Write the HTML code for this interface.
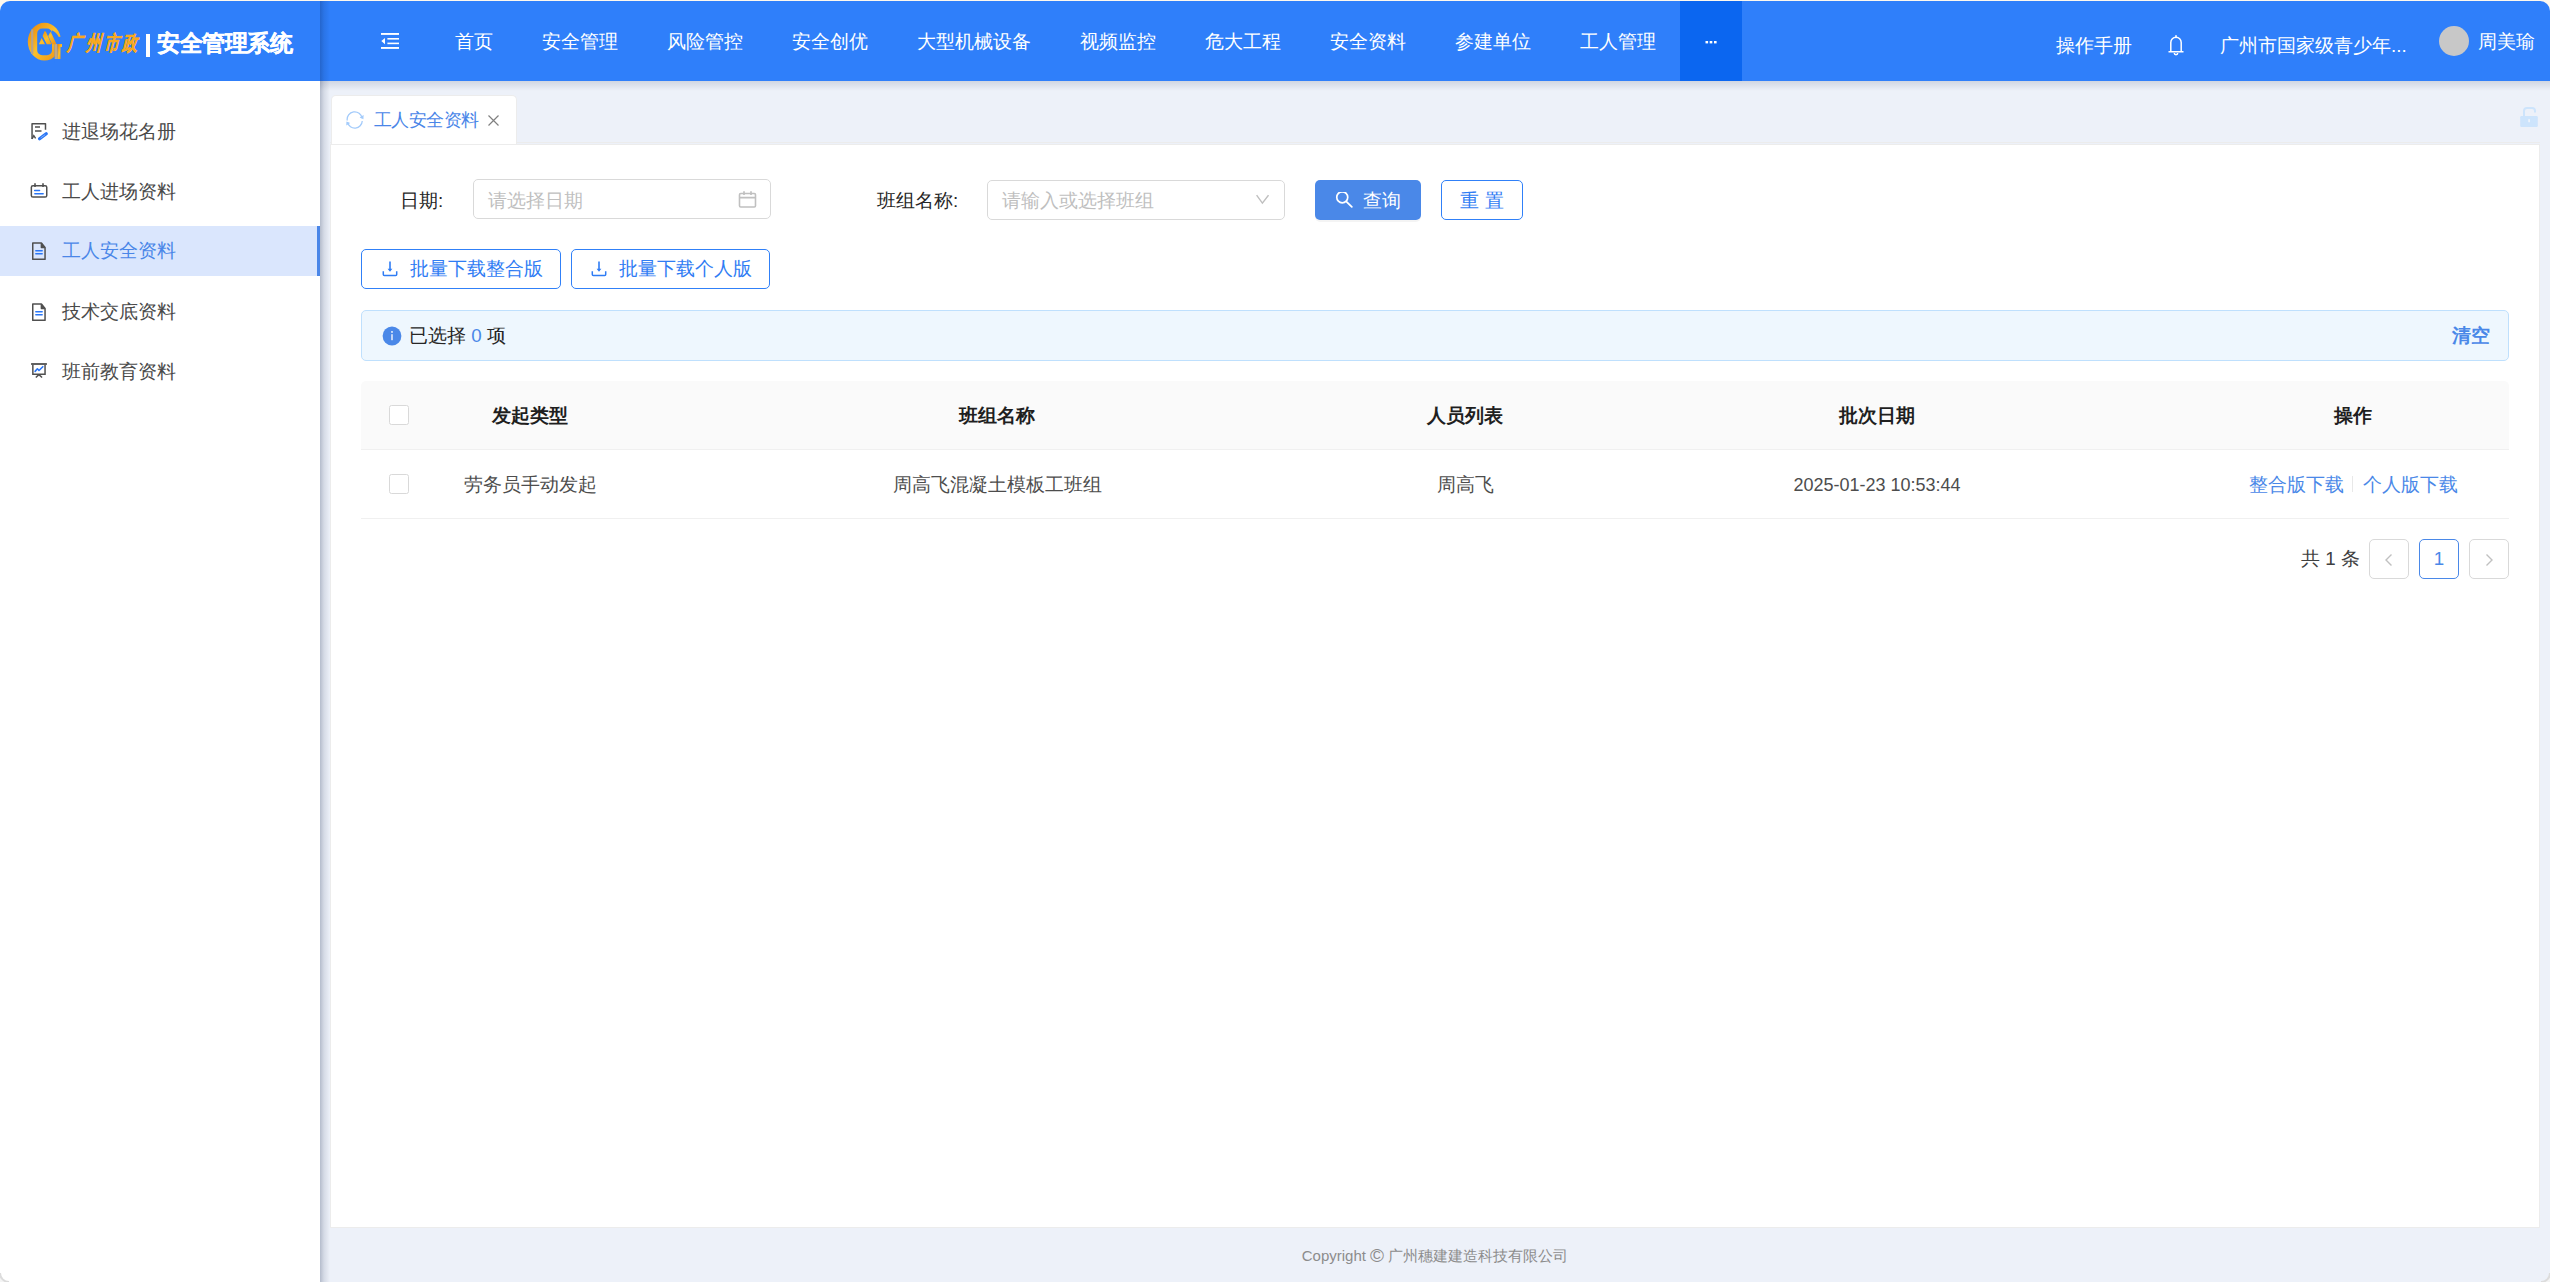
<!DOCTYPE html>
<html><head><meta charset="utf-8">
<style>
*{margin:0;padding:0;box-sizing:border-box}
html,body{width:2550px;height:1282px;overflow:hidden;background:#fdf8ee}
body{font-family:"Liberation Sans",sans-serif;position:relative}
.abs{position:absolute}
#app{position:absolute;left:0;top:1px;width:2550px;height:1281px;border-radius:10px 10px 10px 10px;overflow:hidden;background:#edf1f9}
#hdr{position:absolute;left:0;top:0;width:2550px;height:80px;background:#2f7ffa}
#side{position:absolute;left:0;top:80px;width:320px;height:1201px;background:#fff}
#sideshadow{position:absolute;left:320px;top:0;width:10px;height:1281px;background:linear-gradient(90deg,rgba(0,20,60,.24),rgba(0,20,60,.1) 40%,rgba(0,20,60,0))}
#hdrshadow{position:absolute;left:320px;top:80px;width:2230px;height:10px;background:linear-gradient(180deg,rgba(0,20,60,.12),rgba(0,20,60,0))}
.nav{position:absolute;height:80px;line-height:80px;color:#fff;font-size:18.75px;white-space:nowrap}
.si{position:absolute;left:0;width:320px;height:50px;line-height:50px;font-size:18.75px;color:#4a4a4a}
.si span{position:absolute;left:62px;top:0}
.si svg{position:absolute;left:30px;top:16px}
.txt{position:absolute;white-space:nowrap}
.th{top:402px;font-size:18.75px;line-height:26px;color:#1f1f1f;font-weight:bold}
.td{top:471px;font-size:18.75px;line-height:26px;color:#4d4d4d}
</style></head>
<body>
<div id="app">
  <div id="hdr">
    <!-- logo -->
    <svg class="abs" style="left:0;top:0" width="70" height="70" viewBox="0 0 70 70">
      <defs><linearGradient id="g1" x1="0" y1="0" x2="1" y2="1"><stop offset="0" stop-color="#e5820c"/><stop offset=".5" stop-color="#fcc02c"/><stop offset="1" stop-color="#ec8e12"/></linearGradient></defs>
      <path fill-rule="evenodd" fill="url(#g1)" d="M27.8 40.7 A16.7 18.9 0 1 0 61.2 40.7 A16.7 18.9 0 1 0 27.8 40.7 Z M42.2 27.6 H47 A5 5 0 0 1 52 32.6 V49.2 A5 5 0 0 1 47 54.2 H42.2 A5 5 0 0 1 37.2 49.2 V32.6 A5 5 0 0 1 42.2 27.6 Z"/>
      <path d="M51.8 29.2 Q56.8 31.5 58.8 36 L63 35.2 L66 43 L52 43 Z" fill="#2f7ffa"/>
      <path d="M54.7 42 H70 V62 H54.7 Z" fill="#2f7ffa"/>
      <path d="M54.7 43 H57.5 V58 H54.7 Z" fill="#c0a88a"/>
      <path d="M57.5 43 H62 V46 H60.5 V58 H57.5 Z" fill="url(#g1)"/>
      <path d="M32.2 28.5 V53" stroke="#b8a48c" stroke-width="2.2"/>
      <path d="M38.9 43.3 L41.6 37 L45 43.3 Z M44.6 30 L42.6 35 L46.8 43.3 L51.4 43.3 L45.9 30.8 Z M50.4 30.8 L48.2 35 L52 43.3 L56.5 43.3 L51.4 32.3 Z" fill="url(#g1)"/>
    </svg>
    <div class="txt" style="left:69px;top:29px;font-size:15px;line-height:26px;color:#f7a920;font-weight:bold;transform:skewX(-14deg) scaleY(1.35);transform-origin:0 50%;letter-spacing:3.2px;-webkit-text-stroke:0.3px #f7a920">广州市政</div>
    <div class="abs" style="left:146px;top:33px;width:4px;height:23px;background:#fff"></div>
    <div class="txt" style="left:157px;top:26px;font-size:22.5px;color:#fff;font-weight:bold;line-height:34px;-webkit-text-stroke:0.35px #fff;letter-spacing:-0.4px">安全管理系统</div>
    <!-- fold icon -->
    <svg class="abs" style="left:380px;top:32px" width="20" height="18" viewBox="0 0 20 18">
      <rect x="1" y="0" width="18" height="1.9" fill="#fff"/><rect x="7.4" y="5" width="11.6" height="1.6" fill="#fff"/><rect x="7.4" y="9.6" width="11.6" height="1.6" fill="#fff"/><rect x="1" y="14" width="18" height="1.9" fill="#fff"/>
      <path d="M1.3 8.1 L5 5 L5 11.2 Z" fill="#fff"/>
    </svg>
    <div class="nav" style="left:455px;top:1px">首页</div>
    <div class="nav" style="left:542px;top:1px">安全管理</div>
    <div class="nav" style="left:667px;top:1px">风险管控</div>
    <div class="nav" style="left:792px;top:1px">安全创优</div>
    <div class="nav" style="left:917px;top:1px">大型机械设备</div>
    <div class="nav" style="left:1080px;top:1px">视频监控</div>
    <div class="nav" style="left:1205px;top:1px">危大工程</div>
    <div class="nav" style="left:1330px;top:1px">安全资料</div>
    <div class="nav" style="left:1455px;top:1px">参建单位</div>
    <div class="nav" style="left:1580px;top:1px">工人管理</div>
    <div class="abs" style="left:1680px;top:0;width:62px;height:80px;background:#0b66f0"></div>
    <svg class="abs" style="left:1704px;top:39px" width="16" height="5" viewBox="0 0 16 5"><rect x="1.5" y="1" width="2.6" height="2.4" fill="#fff"/><rect x="5.7" y="1" width="2.6" height="2.4" fill="#fff"/><rect x="10" y="1" width="2.6" height="2.4" fill="#fff"/></svg>
    <div class="nav" style="left:2056px;top:4.5px">操作手册</div>
    <svg class="abs" style="left:2166px;top:33px" width="20" height="22" viewBox="0 0 20 22">
      <path d="M4.8 17 L4.8 8.5 A5.2 5.2 0 0 1 15.2 8.5 L15.2 17" fill="none" stroke="#fff" stroke-width="1.5"/>
      <path d="M2.5 17.8 H17.5" stroke="#fff" stroke-width="1.6"/>
      <path d="M10 1.8 V3.5" stroke="#fff" stroke-width="1.6" stroke-linecap="round"/>
      <path d="M8.3 19 A1.7 1.7 0 0 0 11.7 19" fill="none" stroke="#fff" stroke-width="1.5"/>
    </svg>
    <div class="nav" style="left:2220px;top:5px">广州市国家级青少年...</div>
    <div class="abs" style="left:2439px;top:25px;width:30px;height:30px;border-radius:50%;background:#c8c8c8"></div>
    <div class="nav" style="left:2478px;top:1px">周美瑜</div>
  </div>

  <div id="side">
    <div class="si" style="top:26px"><svg width="18" height="18" viewBox="0 0 18 18"><path d="M2.05 15.9 V0.75 H15.5 V6.8" fill="none" stroke="#505050" stroke-width="1.5" stroke-linejoin="round"/><path d="M2.05 15.9 L3.8 12.6 L5.6 15.3" fill="none" stroke="#505050" stroke-width="1.4"/><path d="M5 4 H10 M5 8 H11.5" stroke="#505050" stroke-width="1.5"/><path d="M9.6 15.8 L16.2 10.8" stroke="#2a76f6" stroke-width="3.2" stroke-linecap="round"/><path d="M10.6 15 L15.2 11.6" stroke="#a8c8fa" stroke-width="0.7"/></svg><span>进退场花名册</span></div>
    <div class="si" style="top:86px"><svg width="18" height="18" viewBox="0 0 18 18"><rect x="1.35" y="2.75" width="15.4" height="11.3" rx="1.6" fill="none" stroke="#505050" stroke-width="1.5"/><path d="M5 0.3 V4 M13 0.3 V4" stroke="#505050" stroke-width="1.6"/><path d="M4.6 7.5 H9.6 M4.8 10.7 H13.2" stroke="#2a76f6" stroke-width="1.4" stroke-linecap="round"/></svg><span>工人进场资料</span></div>
    <div class="si" style="top:144.75px;background:#dae6fd;color:#4a86e8"><div class="abs" style="left:317px;top:0;width:3px;height:50px;background:#4a86e8"></div><svg width="18" height="18" viewBox="0 0 18 18"><path d="M2.75 1 H11.4 L15.05 5.4 V17.3 H2.75 Z" fill="none" stroke="#505050" stroke-width="1.5" stroke-linejoin="round"/><path d="M11.4 1 V5.4 H15.05" fill="#505050" stroke="#505050" stroke-width="1.5" stroke-linejoin="round"/><path d="M5.8 8.75 H12.2 M5.8 11.75 H12.2" stroke="#2a76f6" stroke-width="1.4" stroke-linecap="round"/></svg><span>工人安全资料</span></div>
    <div class="si" style="top:206px"><svg width="18" height="18" viewBox="0 0 18 18"><path d="M2.75 1 H11.4 L15.05 5.4 V17.3 H2.75 Z" fill="none" stroke="#505050" stroke-width="1.5" stroke-linejoin="round"/><path d="M11.4 1 V5.4 H15.05" fill="#505050" stroke="#505050" stroke-width="1.5" stroke-linejoin="round"/><path d="M5.8 8.75 H12.2 M5.8 11.75 H12.2" stroke="#2a76f6" stroke-width="1.4" stroke-linecap="round"/></svg><span>技术交底资料</span></div>
    <div class="si" style="top:266px"><svg width="18" height="18" viewBox="0 0 18 18"><path d="M1.1 1 H16.9" stroke="#505050" stroke-width="1.8"/><path d="M2.85 1.7 V11.2 H15.05 V1.7" fill="none" stroke="#505050" stroke-width="1.5"/><path d="M8.9 11.6 L5.8 14.5 M8.9 11.6 L12.1 14.5" stroke="#505050" stroke-width="1.5"/><path d="M5.1 8.4 L7.4 5.8 L9 7.5 L12.8 3.7" fill="none" stroke="#2a76f6" stroke-width="1.6" stroke-linejoin="round" stroke-linecap="round"/></svg><span>班前教育资料</span></div>
  </div>

  <!-- content -->
  <div class="abs" style="left:330px;top:141px;width:2210px;height:1px;background:#ececec"></div>
  <div class="abs" style="left:330px;top:143px;width:2210px;height:1084px;background:#fff;border:1px solid #ececec"></div>
  <div class="abs" style="left:331px;top:94px;width:186px;height:49px;background:#fff;border:1px solid #ececec;border-bottom:none;border-radius:5px 5px 0 0"></div>
  


  <!-- tab -->
  <svg class="abs" style="left:346px;top:110px" width="18" height="18" viewBox="0 0 18 18"><path d="M1.25 9.5 A7.5 7.5 0 0 1 16.1 7.2" fill="none" stroke="#a3cbfb" stroke-width="1.3"/><path d="M16.25 10 A7.5 7.5 0 0 1 1.5 11.5" fill="none" stroke="#a3cbfb" stroke-width="1.3"/><path d="M13.6 6.6 L17.4 8.2 L17.6 4 Z" fill="#a3cbfb"/><path d="M4.2 12.1 L0.4 10.5 L0.3 14.6 Z" fill="#a3cbfb"/></svg>
  <div class="txt" style="left:373.5px;top:107px;font-size:17.5px;line-height:24px;color:#4a86e8;letter-spacing:-0.5px">工人安全资料</div>
  <svg class="abs" style="left:487px;top:113px" width="13" height="13" viewBox="0 0 13 13"><path d="M1.5 1.5 L11.5 11.5 M11.5 1.5 L1.5 11.5" stroke="#808080" stroke-width="1.2"/></svg>
  <!-- lock -->
  <svg class="abs" style="left:2519px;top:105px" width="20" height="22" viewBox="0 0 20 22"><path d="M5 10.5 V5 Q5 1.9 8 1.9 H13 Q16 1.9 16 5 V6.5" fill="none" stroke="#cde4fc" stroke-width="2"/><rect x="1.2" y="10" width="17.6" height="11" rx="1.2" fill="#cde4fc"/><rect x="9.2" y="13.2" width="1.8" height="3" fill="#eef3fb"/></svg>
  <!-- form -->
  <div class="txt" style="left:400px;top:187px;font-size:18.75px;line-height:26px;color:#262626">日期:</div>
  <div class="abs" style="left:473px;top:178px;width:298px;height:40px;border:1.25px solid #d9d9d9;border-radius:5px;background:#fff"></div>
  <div class="txt" style="left:488px;top:187px;font-size:18.75px;line-height:26px;color:#bfbfbf">请选择日期</div>
  <svg class="abs" style="left:738px;top:189px" width="19" height="19" viewBox="0 0 19 19"><rect x="1.5" y="3.5" width="16" height="13.5" rx="1.2" fill="none" stroke="#c0c0c0" stroke-width="1.6"/><path d="M1.5 7.6 H17.5 M6 1.3 V5 M13 1.3 V5" stroke="#c0c0c0" stroke-width="1.7"/></svg>

  <div class="txt" style="left:877px;top:187px;font-size:18.75px;line-height:26px;color:#262626">班组名称:</div>
  <div class="abs" style="left:987px;top:179px;width:298px;height:40px;border:1.25px solid #d9d9d9;border-radius:5px;background:#fff"></div>
  <div class="txt" style="left:1002px;top:187px;font-size:18.75px;line-height:26px;color:#bfbfbf">请输入或选择班组</div>
  <svg class="abs" style="left:1255px;top:193px" width="14" height="12" viewBox="0 0 14 12"><path d="M1.6 1.2 L7.4 9.2 L13.5 1.2" fill="none" stroke="#bfbfbf" stroke-width="1.4"/></svg>

  <div class="abs" style="left:1315px;top:179px;width:106px;height:40px;border-radius:5px;background:#4a88e8;box-shadow:0 2px 0 rgba(0,0,0,.045)"></div>
  <svg class="abs" style="left:1335px;top:191px" width="18" height="18" viewBox="0 0 18 18"><circle cx="7.25" cy="5.3" r="5.5" fill="none" stroke="#fff" stroke-width="1.7"/><path d="M11.4 9.6 L16.8 14.8" stroke="#fff" stroke-width="1.8" stroke-linecap="round"/></svg>
  <div class="txt" style="left:1363px;top:187px;font-size:18.75px;line-height:26px;color:#fff">查询</div>
  <div class="abs" style="left:1441px;top:179px;width:82px;height:40px;border:1.25px solid #3080f8;border-radius:5px;background:#fff"></div>
  <div class="txt" style="left:1460px;top:187px;font-size:18.75px;line-height:26px;color:#2f7cf4;word-spacing:1px">重 置</div>

  <!-- batch buttons -->
  <div class="abs" style="left:361px;top:248px;width:200px;height:40px;border:1.25px solid #3080f8;border-radius:5px;background:#fff"></div>
  <svg class="abs" style="left:381px;top:259px" width="18" height="18" viewBox="0 0 18 18"><path d="M9 1.5 V9.5" stroke="#2f7cf4" stroke-width="1.6"/><path d="M6.6 8.8 H11.4 L9 11.8 Z" fill="#2f7cf4"/><path d="M2.3 11.2 V14.6 A1 1 0 0 0 3.3 15.6 H14.7 A1 1 0 0 0 15.7 14.6 V11.2" fill="none" stroke="#2f7cf4" stroke-width="1.5"/></svg>
  <div class="txt" style="left:410px;top:255px;font-size:18.75px;line-height:26px;color:#2f7cf4">批量下载整合版</div>
  <div class="abs" style="left:571px;top:248px;width:199px;height:40px;border:1.25px solid #3080f8;border-radius:5px;background:#fff"></div>
  <svg class="abs" style="left:590px;top:259px" width="18" height="18" viewBox="0 0 18 18"><path d="M9 1.5 V9.5" stroke="#2f7cf4" stroke-width="1.6"/><path d="M6.6 8.8 H11.4 L9 11.8 Z" fill="#2f7cf4"/><path d="M2.3 11.2 V14.6 A1 1 0 0 0 3.3 15.6 H14.7 A1 1 0 0 0 15.7 14.6 V11.2" fill="none" stroke="#2f7cf4" stroke-width="1.5"/></svg>
  <div class="txt" style="left:619px;top:255px;font-size:18.75px;line-height:26px;color:#2f7cf4">批量下载个人版</div>

  <!-- alert -->
  <div class="abs" style="left:361px;top:309px;width:2148px;height:51px;border:1.25px solid #bfe0fd;border-radius:5px;background:#eef7fe"></div>
  <svg class="abs" style="left:381.5px;top:324.5px" width="20" height="20" viewBox="0 0 20 20"><circle cx="10" cy="10" r="9.4" fill="#4a88e8"/><rect x="9.35" y="8.2" width="1.3" height="6" fill="#fff"/><circle cx="10" cy="5.9" r="0.9" fill="#fff"/></svg>
  <div class="txt" style="left:409px;top:322px;font-size:18.75px;line-height:26px;color:#262626">已选择 <span style="color:#4a88e8">0</span> 项</div>
  <div class="txt" style="left:2452px;top:322px;font-size:18.75px;line-height:26px;color:#4a88e8;font-weight:bold">清空</div>

  <!-- table -->
  <div class="abs" style="left:361px;top:379.75px;width:2148px;height:68.75px;background:#fafafa;border-radius:5px 5px 0 0;border-bottom:1.25px solid #f0f0f0"></div>
  <div class="abs" style="left:389px;top:404px;width:20px;height:20px;border:1.25px solid #d9d9d9;border-radius:2.5px;background:#fff"></div>
  <div class="txt th" style="left:430px;width:200px;text-align:center">发起类型</div>
  <div class="txt th" style="left:897px;width:200px;text-align:center">班组名称</div>
  <div class="txt th" style="left:1365px;width:200px;text-align:center">人员列表</div>
  <div class="txt th" style="left:1777px;width:200px;text-align:center">批次日期</div>
  <div class="txt th" style="left:2253px;width:200px;text-align:center">操作</div>

  <div class="abs" style="left:361px;top:517px;width:2148px;height:1.25px;background:#f0f0f0"></div>
  <div class="abs" style="left:389px;top:473px;width:20px;height:20px;border:1.25px solid #d9d9d9;border-radius:2.5px;background:#fff"></div>
  <div class="txt td" style="left:430px;width:200px;text-align:center">劳务员手动发起</div>
  <div class="txt td" style="left:847px;width:300px;text-align:center">周高飞混凝土模板工班组</div>
  <div class="txt td" style="left:1365px;width:200px;text-align:center">周高飞</div>
  <div class="txt td" style="left:1777px;width:200px;text-align:center;font-size:18px">2025-01-23 10:53:44</div>
  <div class="txt td" style="left:2249px;color:#4a88e8">整合版下载</div>
  <div class="abs" style="left:2352px;top:475px;width:1.25px;height:16px;background:#e8e8e8"></div>
  <div class="txt td" style="left:2363px;color:#4a88e8">个人版下载</div>

  <!-- pagination -->
  <div class="txt" style="left:2301px;top:545px;font-size:18.75px;line-height:26px;color:#404040">共 1 条</div>
  <div class="abs" style="left:2369px;top:538px;width:40px;height:40px;border:1.25px solid #d9d9d9;border-radius:5px;background:#fff"></div>
  <svg class="abs" style="left:2383px;top:552px" width="12" height="14" viewBox="0 0 12 14"><path d="M8.5 1.5 L3 7 L8.5 12.5" fill="none" stroke="#c0c0c0" stroke-width="1.4"/></svg>
  <div class="abs" style="left:2419px;top:538px;width:40px;height:40px;border:1.25px solid #4a88e8;border-radius:5px;background:#fff"></div>
  <div class="txt" style="left:2419px;top:545px;width:40px;text-align:center;font-size:18.75px;line-height:26px;color:#4a88e8">1</div>
  <div class="abs" style="left:2469px;top:538px;width:40px;height:40px;border:1.25px solid #d9d9d9;border-radius:5px;background:#fff"></div>
  <svg class="abs" style="left:2483px;top:552px" width="12" height="14" viewBox="0 0 12 14"><path d="M3.5 1.5 L9 7 L3.5 12.5" fill="none" stroke="#c0c0c0" stroke-width="1.4"/></svg>

  <!-- footer -->
  <div class="txt" style="left:1300px;top:1244px;width:270px;text-align:center;font-size:15px;line-height:22px;color:#8c8c8c">Copyright <span style="font-size:19px;line-height:15px;position:relative;top:1px">©</span> 广州穗建建造科技有限公司</div>
  <div id="hdrshadow"></div>
  <div id="sideshadow"></div>
</div>
<svg class="abs" style="left:0;top:1262px" width="20" height="20" viewBox="0 0 20 20"><path d="M0 0 V11 A9 9 0 0 0 9 20 H0 Z" fill="#f4f4f4"/><path d="M0 11 A9 9 0 0 0 9 20" fill="none" stroke="#dcdcdc" stroke-width="2"/></svg>
<svg class="abs" style="left:2530px;top:1262px" width="20" height="20" viewBox="0 0 20 20"><path d="M20 0 V11 A9 9 0 0 1 11 20 H20 Z" fill="#f4f4f4"/><path d="M20 11 A9 9 0 0 1 11 20" fill="none" stroke="#dcdcdc" stroke-width="2"/></svg>
</body></html>
